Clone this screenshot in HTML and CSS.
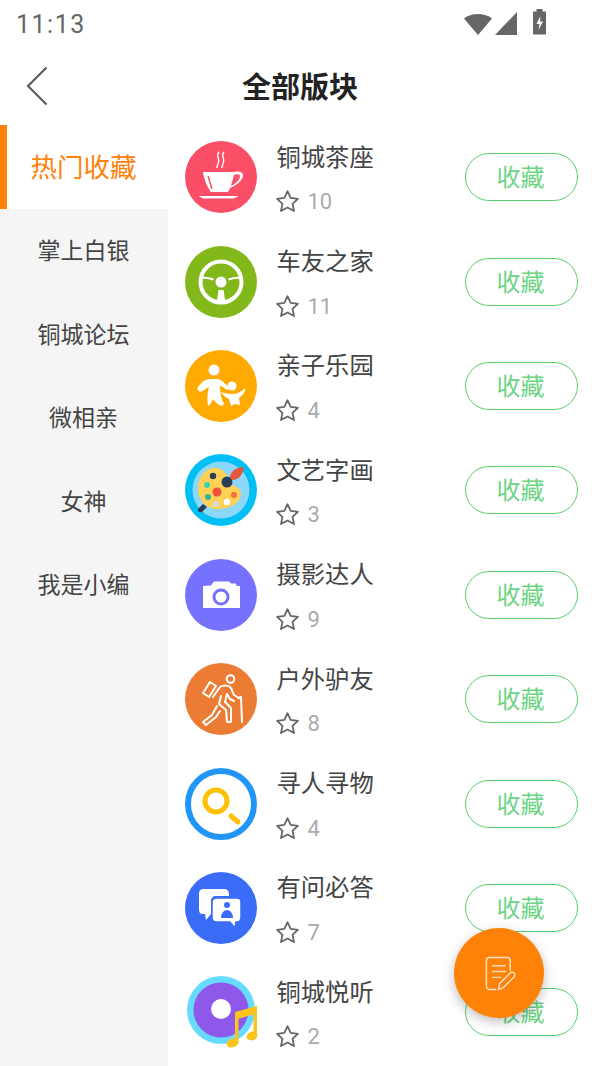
FILE: index.html
```html
<!DOCTYPE html>
<html lang="zh-CN">
<head>
  <meta charset="UTF-8" />
  <meta name="viewport" content="width=device-width, initial-scale=1.0"/>
  <title>全部版块</title>
  <link rel="stylesheet" href="styles.css">
</head>
<body>
  <svg class="defs" width="0" height="0">
    <symbol id="star" viewBox="0 0 24 24">
      <path d="M12 2l3 6.500 7 .9-5.200 4.800 1.500 7L12 17.700 5.700 21.200l1.500-7L2 9.400l7-.9z" fill="none" stroke="#666" stroke-width="1.700" stroke-linejoin="round"/>
    </symbol>
  </svg>

  <div class="status-bar">
    <span class="time">11:13</span>
    <div class="status-icons">
      <svg class="wifi" width="28" height="24" viewBox="0 0 28 24"><path d="M0 7.500C3.500 4.500 8.500 3 14 3s10.500 1.500 14 4.500L14 24z" fill="#666"/></svg>
      <svg class="signal" width="23" height="24" viewBox="0 0 23 24"><path d="M22 1v23H0z" fill="#666"/></svg>
      <svg class="battery" width="15" height="26" viewBox="0 0 15 26"><path d="M4.500 0h6v2.500h3.500v23H1v-23h3.500z" fill="#666"/><path d="M8.500 7l-4 8h3l-1 6 4.500-8.500h-3z" fill="#fff"/></svg>
    </div>
  </div>

  <header class="top-bar">
    <svg class="back" width="22" height="40" viewBox="0 0 22 40"><path d="M20.500 1.500L2 20l18.500 18.500" fill="none" stroke="#555" stroke-width="2"/></svg>
    <h1>全部版块</h1>
  </header>

  <div class="content">
    <nav class="sidebar">
      <a class="side-item active">热门收藏</a>
      <a class="side-item">掌上白银</a>
      <a class="side-item">铜城论坛</a>
      <a class="side-item">微相亲</a>
      <a class="side-item">女神</a>
      <a class="side-item">我是小编</a>
    </nav>

    <main class="list">
      <div class="row">
        <svg class="icon" viewBox="0 0 72 72">
          <circle cx="36" cy="36" r="36" fill="#fb4f68"/>
          <path d="M34 11c-4 4 2 7-1 12-.5 1-1 2-1 4M39 11c-4 4 2 7-1 12-.5 1-1 2-1 4" fill="none" stroke="#fff" stroke-width="1.400"/>
          <path d="M18 31h31c2-1 9-1 9 3 0 6-8 11-13 13l-2 4H26c-4-5-7-13-8-20z" fill="#fff"/>
          <path d="M49 34c2-1 6-1 6 1 0 4-5 8-9 10z" fill="#fb4f68"/>
          <path d="M23 35l4 13" stroke="#fb4f68" stroke-width="1.500"/>
          <path d="M14 55h39c-2 2-4 2.500-7 2.500H21c-3 0-5-.5-7-2.500z" fill="#fff"/>
        </svg>
        <div class="info">
          <div class="name">铜城茶座</div>
          <div class="meta"><svg class="star"><use href="#star"/></svg><span>10</span></div>
        </div>
        <button class="fav">收藏</button>
      </div>

      <div class="row">
        <svg class="icon" viewBox="0 0 72 72">
          <circle cx="36" cy="36" r="36" fill="#83b81a"/>
          <circle cx="36" cy="36" r="20.500" fill="none" stroke="#fff" stroke-width="4"/>
          <circle cx="36" cy="36" r="5.500" fill="#fff"/>
          <path d="M15 32c6-1 10 0 13.500 1.500M57 32c-6-1-10 0-13.500 1.500" fill="none" stroke="#fff" stroke-width="2"/>
          <path d="M33.500 44h5l2 13h-9z" fill="#fff"/>
        </svg>
        <div class="info">
          <div class="name">车友之家</div>
          <div class="meta"><svg class="star"><use href="#star"/></svg><span>11</span></div>
        </div>
        <button class="fav">收藏</button>
      </div>

      <div class="row">
        <svg class="icon" viewBox="0 0 72 72">
          <circle cx="36" cy="36" r="36" fill="#ffaa00"/>
          <circle cx="29" cy="20" r="5.500" fill="#fff"/>
          <path d="M12 39C15 33 20 29 25 29H33C37 30 41 34 44 38L42 40C39 38 37 36 35 36C35 42 36 49 39 54L37 56C33 55 30 52 28 49C27 52 25 55 23 56C22 50 22 44 24 37C22 38 18 41 15 42Z" fill="#fff"/>
          <circle cx="47" cy="36" r="4.500" fill="#fff"/>
          <path d="M36 42C40 43 43 44 47 44C52 44 56 42 60 38L60 41C58 45 55 47 54 48L55 55L50 54L46 56L44 49C41 48 38 45 36 42Z" fill="#fff"/>
        </svg>
        <div class="info">
          <div class="name">亲子乐园</div>
          <div class="meta"><svg class="star"><use href="#star"/></svg><span>4</span></div>
        </div>
        <button class="fav">收藏</button>
      </div>

      <div class="row">
        <svg class="icon" viewBox="0 0 72 72">
          <circle cx="36" cy="36" r="36" fill="#00bff5"/>
          <circle cx="36" cy="36" r="28.500" fill="#8cd8fb"/>
          <path d="M30 14c7 0 12 5 14 11 1 4 4 7 9 9 3 2 4 6 2 10-3 7-11 10-20 11-11 1-22-7-22-20 0-12 7-21 17-21z" fill="#ffd155"/>
          <path d="M13 55l5-5 4 3-5 5c-3 1-5-1-4-3z" fill="#2c3e58"/>
          <circle cx="28" cy="22" r="3.200" fill="#2c3e58"/>
          <circle cx="42" cy="28" r="5.500" fill="#2c3e58"/>
          <circle cx="22" cy="31" r="3" fill="#3ecdb0"/>
          <circle cx="32" cy="38" r="4.500" fill="#f2503a"/>
          <circle cx="23" cy="43" r="3" fill="#2fb59a"/>
          <circle cx="31" cy="50" r="3" fill="#d5d8de"/>
          <circle cx="42" cy="48" r="3.200" fill="#fff"/>
          <circle cx="49" cy="41" r="3" fill="#f2703a"/>
          <path d="M45 24c0-6 5-11 14-11-1 8-6 13-11 13z" fill="#e9573f"/>
        </svg>
        <div class="info">
          <div class="name">文艺字画</div>
          <div class="meta"><svg class="star"><use href="#star"/></svg><span>3</span></div>
        </div>
        <button class="fav">收藏</button>
      </div>

      <div class="row">
        <svg class="icon" viewBox="0 0 72 72">
          <circle cx="36" cy="36" r="36" fill="#7672ff"/>
          <path d="M18 27l8-.5 3-4h15l2 2h5l.5 2.500H55v22H18z" fill="#fff"/>
          <circle cx="36" cy="38" r="7" fill="#fff" stroke="#7672ff" stroke-width="3"/>
        </svg>
        <div class="info">
          <div class="name">摄影达人</div>
          <div class="meta"><svg class="star"><use href="#star"/></svg><span>9</span></div>
        </div>
        <button class="fav">收藏</button>
      </div>

      <div class="row">
        <svg class="icon" viewBox="0 0 72 72">
          <circle cx="36" cy="36" r="36" fill="#ec7c34"/>
          <g fill="none" stroke="#fff" stroke-width="2" stroke-linejoin="round" stroke-linecap="round">
            <circle cx="45.500" cy="16" r="3.800"/>
            <path d="M18 30l7-11 6 4-7 11z"/>
            <path d="M28 34l7-10c3-2 9-2 11 1l3 7 7 4"/>
            <path d="M36 33l-2 8 7 6 1 12h4l0-14-6-6 2-8 3 5 4 2"/>
            <path d="M32 43l-5 9-9 7 3 3 10-8 4-6"/>
            <path d="M53 35l3-1 1 25"/>
          </g>
        </svg>
        <div class="info">
          <div class="name">户外驴友</div>
          <div class="meta"><svg class="star"><use href="#star"/></svg><span>8</span></div>
        </div>
        <button class="fav">收藏</button>
      </div>

      <div class="row">
        <svg class="icon" viewBox="0 0 72 72">
          <circle cx="36" cy="36" r="33" fill="#fff" stroke="#2196f8" stroke-width="6"/>
          <circle cx="31" cy="33" r="11" fill="none" stroke="#ffc107" stroke-width="5"/>
          <path d="M46 48l7 6" stroke="#ffc107" stroke-width="5" stroke-linecap="round"/>
        </svg>
        <div class="info">
          <div class="name">寻人寻物</div>
          <div class="meta"><svg class="star"><use href="#star"/></svg><span>4</span></div>
        </div>
        <button class="fav">收藏</button>
      </div>

      <div class="row">
        <svg class="icon" viewBox="0 0 72 72">
          <circle cx="36" cy="36" r="36" fill="#3b6cf8"/>
          <path d="M18 17h21c3 0 5 2 5 5v2H31c-3 0-5 2-5 5v13l-5 6-1-6h-2c-3 0-4-2-4-5V21c0-2 2-4 4-4z" fill="#fff"/>
          <path d="M31 26h21c3 0 4 2 4 4v15c0 3-2 5-4 5h-1l-1 6-5-6H31c-2 0-4-2-4-5V30c0-2 2-4 4-4z" fill="#fff" stroke="#3b6cf8" stroke-width="1.500"/>
          <circle cx="42" cy="33" r="3" fill="#3b6cf8"/>
          <path d="M36 46c0-5 3-8 6-8s6 3 6 8z" fill="#3b6cf8"/>
        </svg>
        <div class="info">
          <div class="name">有问必答</div>
          <div class="meta"><svg class="star"><use href="#star"/></svg><span>7</span></div>
        </div>
        <button class="fav">收藏</button>
      </div>

      <div class="row">
        <svg class="icon" viewBox="0 0 72 72">
          <circle cx="36" cy="34" r="34" fill="#66dbff"/>
          <circle cx="36" cy="34" r="27.500" fill="#8e58ea"/>
          <circle cx="36" cy="33" r="10" fill="#fff"/>
          <path d="M50 36l22-6v28h-3.500V38.500l-15 4.200V67H50z" fill="#fcc419"/>
          <ellipse cx="47.500" cy="67" rx="6" ry="4.300" transform="rotate(-18 47.500 67)" fill="#fcc419"/>
          <ellipse cx="67" cy="60" rx="5.500" ry="4.300" transform="rotate(-18 67 60)" fill="#fcc419"/>
        </svg>
        <div class="info">
          <div class="name">铜城悦听</div>
          <div class="meta"><svg class="star"><use href="#star"/></svg><span>2</span></div>
        </div>
        <button class="fav">收藏</button>
      </div>
    </main>
  </div>

  <button class="fab">
    <svg width="33" height="37" viewBox="0 0 34 38" fill="none" stroke="#ffe3c4" stroke-width="1.500" stroke-linecap="round">
      <path d="M28 16V6c0-2-1.500-3.500-3.500-3.500H7C5 2.500 3.500 4 3.500 6v26C3.500 34 5 35.500 7 35.500h6"/>
      <path d="M10 11h13M10 17h13M10 23h8"/>
      <path d="M16 35.500l1-6 11-11c1.500-1 3-1 4 0s1 2.500 0 4l-11 11z"/>
    </svg>
  </button>
</body>
</html>
```
FILE: styles.css
```css
:root {
  --orange: #ff8208;
  --green: #5ad16f;
  --text: #444;
  --side-bg: #f5f5f5;
}

html, body {
  height: 1066px;
  overflow: hidden;
}

body {
  position: relative;
  margin: 0;
  background: #fff;
  color: var(--text);
  font-family: Roboto, "Noto Sans CJK SC", sans-serif;
}

.defs {
  position: absolute;
}

.status-bar {
  height: 48px;
  display: flex;
  align-items: center;
  justify-content: space-between;
  padding: 0 53px 0 16px;
}

.time {
  font-size: 25px;
  letter-spacing: 1.500px;
  color: #666;
}

.status-icons {
  display: flex;
  align-items: center;
  gap: 3px;
  margin-top: -3px;
}

.battery {
  margin-left: 11px;
  margin-top: -2px;
}

.top-bar {
  height: 77px;
  display: flex;
  align-items: center;
  justify-content: center;
  position: relative;
}

.top-bar h1 {
  margin: -4px 0 0;
  font-size: 29px;
  font-weight: 700;
  color: #222;
}

.back {
  position: absolute;
  left: 26px;
  top: 18px;
}

.content {
  display: flex;
  height: 941px;
}

.sidebar {
  width: 168px;
  background: var(--side-bg);
  flex-shrink: 0;
}

.side-item {
  display: flex;
  align-items: center;
  justify-content: center;
  height: 83.500px;
  padding-bottom: 2px;
  padding-right: 1px;
  box-sizing: border-box;
  font-size: 23px;
  color: var(--text);
}

.side-item.active {
  background: #fff;
  border-left: 7px solid var(--orange);
  padding-right: 8px;
  font-size: 26.500px;
  color: var(--orange);
}

.list {
  flex: 1;
}

.row {
  height: 104.400px;
  display: flex;
  align-items: center;
  padding: 0 22px 0 17px;
}

.icon {
  width: 72px;
  height: 72px;
  overflow: visible;
  flex-shrink: 0;
}

.info {
  margin-left: 19.500px;
  padding-top: 5px;
}

.name {
  font-size: 24.300px;
  line-height: 32px;
}

.meta {
  display: flex;
  align-items: center;
  gap: 8px;
  margin-top: 12px;
  height: 32px;
  font-size: 22px;
  color: #aaa;
}

.star {
  width: 25px;
  height: 25px;
  margin-left: -2px;
}

.fav {
  margin-left: auto;
  width: 113px;
  height: 48px;
  border: 1.500px solid var(--green);
  border-radius: 24px;
  background: #fff;
  color: #6cd484;
  font: 24px "Noto Sans CJK SC", sans-serif;
  padding: 0 2px 3px 0;
}

.fab {
  position: absolute;
  left: 454px;
  top: 928px;
  width: 90px;
  height: 90px;
  border: none;
  border-radius: 50%;
  background: var(--orange);
  box-shadow: 0 4px 12px rgba(0, 0, 0, 0.25);
  display: flex;
  align-items: center;
  justify-content: center;
  padding: 0;
}
```
